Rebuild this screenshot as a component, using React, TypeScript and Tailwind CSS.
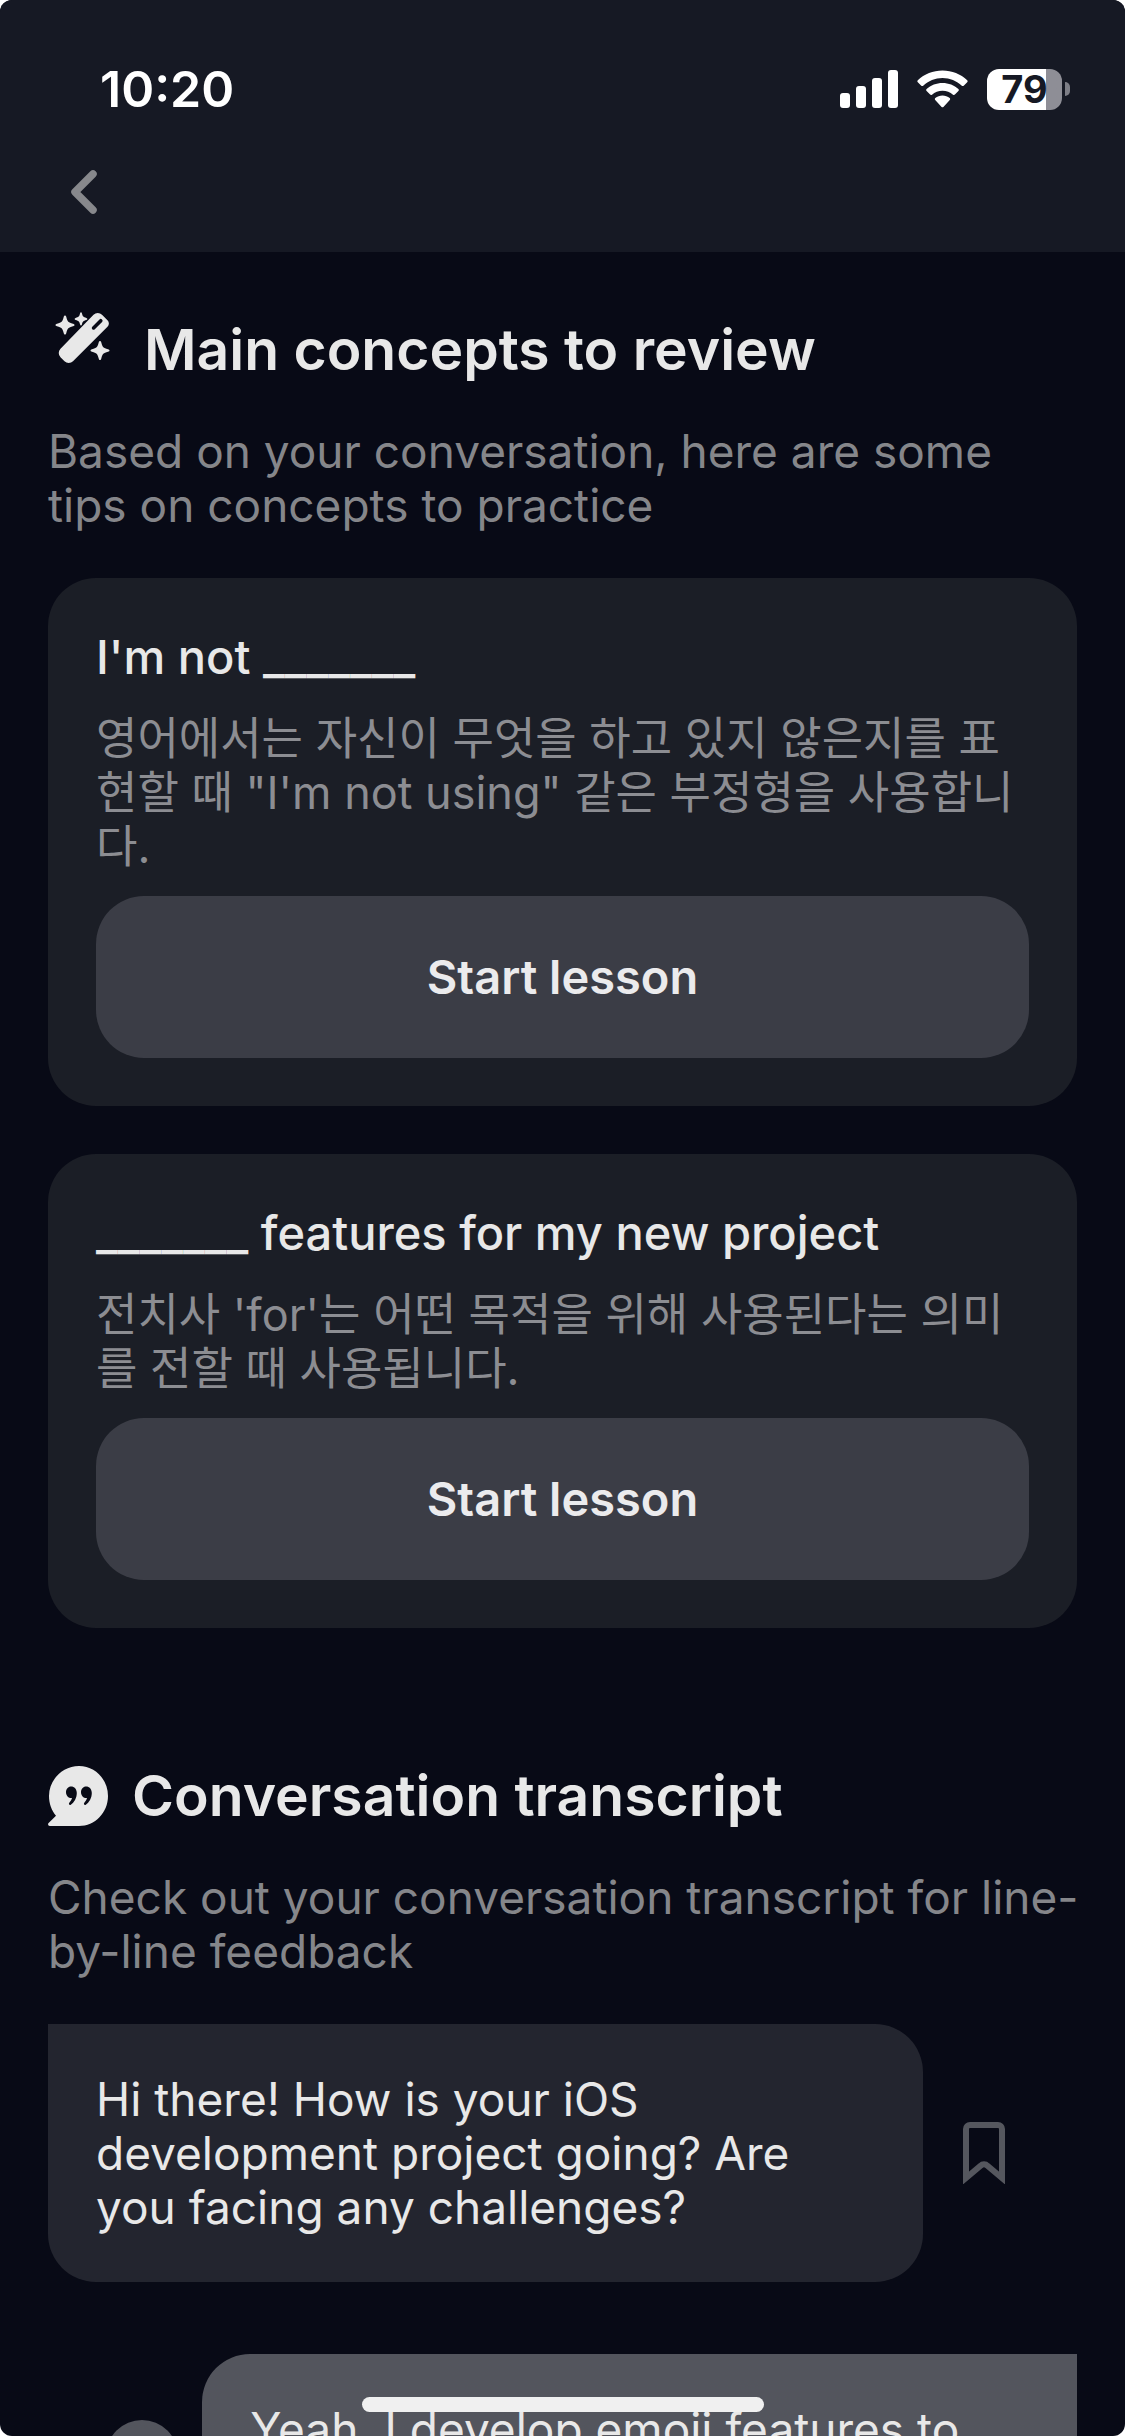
import type { ReactNode } from "react";

interface Lesson {
  phrase: string;
  tip: string;
}

const LESSONS: Lesson[] = [
  {
    phrase: "I'm not _______",
    tip: "영어에서는 자신이 무엇을 하고 있지 않은지를 표현할 때 \"I'm not using\" 같은 부정형을 사용합니다.",
  },
  {
    phrase: "_______ features for my new project",
    tip: "전치사 'for'는 어떤 목적을 위해 사용된다는 의미를 전할 때 사용됩니다.",
  },
];

function StatusBar() {
  return (
    <div className="flex h-[74px] items-center justify-between pl-[100px] pr-[55px] text-white">
      <span className="text-[50px] font-semibold leading-none">10:20</span>
      <div className="flex items-center">
        <svg className="h-[38px] w-[58px]" viewBox="0 0 58 38" fill="currentColor" aria-label="Signal">
          <rect x="0" y="23" width="10" height="15" rx="3" />
          <rect x="16" y="16" width="10" height="22" rx="3" />
          <rect x="32" y="8" width="10" height="30" rx="3" />
          <rect x="48" y="0" width="10" height="38" rx="3" />
        </svg>
        <svg className="ml-[19px] h-[38px] w-[51px]" viewBox="0 0 51 38" fill="currentColor" aria-label="Wi-Fi">
          <path d="M25.5 0.5c9.500 0 18.200 3.600 24.700 9.700.6.600.6 1.400 0 2l-3.500 3.500c-.5.500-1.300.5-1.900 0C39.600 10.900 32.900 8 25.500 8S11.400 10.900 6.200 15.700c-.6.5-1.400.5-1.900 0L.8 12.200c-.6-.6-.6-1.400 0-2C7.300 4.100 16 .5 25.500.5Z" />
          <path d="M25.500 13c6.100 0 11.700 2.300 15.900 6.100.6.600.6 1.400 0 2l-3.500 3.500c-.5.500-1.300.5-1.900.1-2.800-2.500-6.500-4-10.500-4s-7.700 1.500-10.500 4c-.6.4-1.400.4-1.900-.1l-3.500-3.500c-.6-.6-.6-1.400 0-2C13.800 15.300 19.400 13 25.500 13Z" />
          <path d="M25.500 25.500c2.700 0 5.200 1 7.200 2.600.6.500.6 1.300.1 1.900l-6.400 6.900c-.5.600-1.300.600-1.800 0L18.200 30c-.5-.6-.5-1.400.1-1.900 2-1.600 4.500-2.600 7.200-2.600Z" />
        </svg>
        <div className="ml-[19px] flex h-[41px] w-[75px] items-center justify-center rounded-xl bg-linear-to-r from-white from-79% to-[#8e8e96] to-79%">
          <span className="text-[38px] font-bold leading-[41px] text-[#161924]">79</span>
        </div>
        <div className="ml-[3px] h-[14px] w-[5px] rounded-r-full bg-[#7d7e86]" />
      </div>
    </div>
  );
}

function WandIcon() {
  return (
    <svg className="h-[76px] w-[72px]" viewBox="0 0 72 76" fill="#e8e8e8" aria-hidden="true">
      <path
        fillRule="evenodd"
        d="M45.500 14.700a6 6 0 0 1 8.500 0l5.500 5.500a4.500 4.500 0 0 1 0 6.500L25 61.200a6 6 0 0 1-8.500 0l-4-4a6 6 0 0 1 0-8.500ZM51.500 19.500 44.300 26.700a1.700 1.700 0 0 0 2.500 2.500l7.300-7.300a1.700 1.700 0 0 0-2.600-2.400Z"
      />
      <path d="M17 15.500c.6 0 1 .5 1.300 1.500 1.400 4.900 1.900 5.400 6.700 6.700 1 .3 1.500.7 1.500 1.300s-.5 1-1.500 1.300c-4.800 1.400-5.300 1.900-6.700 6.700-.3 1-.7 1.500-1.300 1.500s-1-.5-1.300-1.500c-1.400-4.800-1.900-5.300-6.700-6.700-1-.3-1.500-.7-1.500-1.300s.5-1 1.500-1.300c4.800-1.300 5.300-1.800 6.700-6.700.3-1 .7-1.500 1.300-1.500Z" />
      <path d="M33 12.300c.5 0 .7.300.9 1 .8 3.300 1.300 3.700 4.500 4.600.6.200 1 .5 1 1s-.4.800-1 1c-3.200.9-3.700 1.300-4.500 4.500-.2.700-.4 1-.9 1s-.7-.3-.9-1c-.8-3.200-1.300-3.600-4.500-4.500-.6-.2-1-.5-1-1s.4-.8 1-1c3.200-.9 3.700-1.300 4.500-4.600.2-.7.400-1 .9-1Z" />
      <path d="M52 41c.6 0 1 .5 1.300 1.500 1.400 4.900 1.900 5.400 6.700 6.700 1 .3 1.500.7 1.500 1.300s-.5 1-1.500 1.300c-4.800 1.400-5.300 1.900-6.700 6.700-.3 1-.7 1.500-1.300 1.500s-1-.5-1.300-1.500c-1.400-4.800-1.900-5.300-6.700-6.700-1-.3-1.500-.7-1.500-1.300s.5-1 1.500-1.300c4.800-1.300 5.300-1.800 6.700-6.700.3-1 .7-1.500 1.300-1.500Z" />
    </svg>
  );
}

function QuoteBubbleIcon() {
  return (
    <svg className="h-[60px] w-[60px]" viewBox="0 0 60 60" aria-hidden="true">
      <path
        fill="#e8e8e8"
        d="M31 0C47 0 60 13.400 60 30S47 60 31 60H1.800C.2 60-.5 58.200.6 57.100L8 49.800C3.600 44.600 1 37.600 1 30 1 13.400 15 0 31 0Z"
      />
      <g fill="#080a16">
        <path d="M23 20.500c3.400 0 5.800 2.700 5.800 6.500 0 5-2.700 9.500-6 11.700-1.300.8-2.500-.8-1.500-1.900 1.300-1.400 2.300-3 2.700-4.700-3.300.3-6-2.200-6-5.800 0-3.300 2.200-5.800 5-5.800Z" />
        <path d="M38 20.500c3.400 0 5.800 2.700 5.800 6.500 0 5-2.700 9.500-6 11.700-1.300.8-2.500-.8-1.500-1.900 1.300-1.400 2.300-3 2.700-4.700-3.300.3-6-2.200-6-5.800 0-3.300 2.200-5.800 5-5.800Z" />
      </g>
    </svg>
  );
}

function SectionIntro({ icon, title, children }: { icon: ReactNode; title: string; children: ReactNode }) {
  return (
    <>
      <div className="flex h-[100px] gap-6">
        {icon}
        <h2 className="self-center text-[57px] font-semibold leading-[72px] text-[#e8e8e8]">{title}</h2>
      </div>
      <p className="-mr-1 mt-6 text-[46px] leading-[54px] text-[#85868a]">{children}</p>
    </>
  );
}

function LessonCard({ phrase, tip }: Lesson) {
  return (
    <article className="rounded-[48px] bg-[#1b1e26] p-12">
      <h3 className="text-[47px] font-medium leading-[62px] text-[#e8e8e8]">{phrase}</h3>
      <p lang="ko" className="mt-6 text-[45px] leading-[54px] text-[#8c8d92]">
        {tip}
      </p>
      <button className="mt-[22px] h-[162px] w-full rounded-[48px] bg-[#3b3d46] text-[47px] font-semibold text-[#ebebed]">
        Start lesson
      </button>
    </article>
  );
}

export default function App() {
  return (
    <div className="h-screen bg-white">
      <div className="relative flex h-full flex-col overflow-hidden rounded-xl bg-[#080a16] font-['Inter','Noto_Sans_CJK_KR',sans-serif]">
        <header className="shrink-0 bg-[#161924] pb-6 pt-[52px]">
          <StatusBar />
          <button aria-label="Back" className="ml-12 mt-[30px] flex size-[72px] items-center justify-center">
            <svg className="h-[44px] w-[26px]" viewBox="0 0 26 44" fill="none">
              <path d="M22 4 4 22l18 18" stroke="#87888c" strokeWidth="7.500" strokeLinecap="round" strokeLinejoin="round" />
            </svg>
          </button>
        </header>

        <main className="min-h-0 flex-1 overflow-hidden px-12 pt-12">
          <section>
            <SectionIntro icon={<WandIcon />} title="Main concepts to review">
              Based on your conversation, here are some tips on concepts to practice
            </SectionIntro>
            <div className="mt-[46px] flex flex-col gap-12">
              {LESSONS.map((lesson) => (
                <LessonCard key={lesson.phrase} {...lesson} />
              ))}
            </div>
          </section>

          <section className="mt-[118px]">
            <SectionIntro
              icon={
                <span className="self-center">
                  <QuoteBubbleIcon />
                </span>
              }
              title="Conversation transcript"
            >
              Check out your conversation transcript for line-by-line feedback
            </SectionIntro>

            <div className="mt-[46px] flex items-center">
              <p className="w-[85%] rounded-[48px] rounded-tl-none bg-[#23252f] p-12 text-[46px] leading-[54px] text-[#e8e8e8]">
                Hi there! How is your iOS development project going? Are you facing any challenges?
              </p>
              <button aria-label="Bookmark" className="ml-10">
                <svg className="h-[62px] w-[42px]" viewBox="0 0 42 62" fill="none">
                  <path d="M3 56V7a4 4 0 0 1 4-4h28a4 4 0 0 1 4 4v49L24.500 43.800a5 5 0 0 0-7 0Z" stroke="#55575e" strokeWidth="6" />
                </svg>
              </button>
            </div>

            <div className="mt-[72px] flex items-center justify-end gap-6">
              <button aria-label="Feedback" className="size-[72px] rounded-full bg-[#53555d]" />
              <p className="h-[204px] w-[85%] rounded-[48px] rounded-tr-none bg-[#53555d] p-12 text-[46px] leading-[54px] text-[#e8e8e8]">
                Yeah, I develop emoji features to
              </p>
            </div>
          </section>
        </main>

        <div className="absolute inset-x-0 bottom-6 flex justify-center">
          <div className="h-[15px] w-[402px] rounded-full bg-[#f0f0f0]" />
        </div>
      </div>
    </div>
  );
}
